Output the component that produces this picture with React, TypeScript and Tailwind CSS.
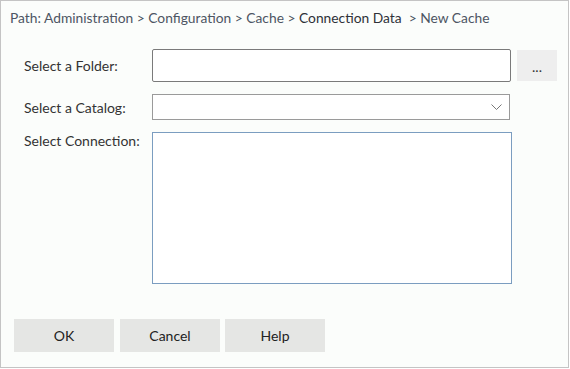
export default function App() {
  return (
    <div className="w-[570px] h-[369px] bg-white">
      <div
        className="w-[569px] h-[368px] border border-[#c4c4c4] bg-[#fbfdfb] flex flex-col text-[14px] text-[#333]"
        style={{ fontFamily: "Lato, 'Open Sans', sans-serif" }}
      >
        {/* breadcrumb */}
        <div className="pl-[9px] pt-[9px] h-[48px] leading-[16px] text-[13.8px] text-[#4d5563] whitespace-pre">
          Path: Administration &gt; Configuration &gt; Cache &gt; <span className="text-[#2e3138]">Connection Data</span>  &gt; New Cache
        </div>

        <div className="flex flex-col pl-[23px]">
          <div className="flex items-center h-[33px]">
            <label className="w-[128px]">Select a Folder:</label>
            <input className="w-[359px] h-[33px] border border-[#7a7a7a] rounded-[2px] bg-white outline-none" />
            <button className="ml-[6px] w-[40px] h-[31px] bg-[#eeeeee] text-[#333] leading-none pt-[2px]">...</button>
          </div>

          <div className="flex items-center h-[26px] mt-[12px]">
            <label className="w-[128px]">Select a Catalog:</label>
            <div className="w-[358px] h-[26px] border border-[#9a9a9a] bg-white flex items-center justify-end pr-[7px]">
              <svg width="11" height="6" viewBox="0 0 11 6" fill="none">
                <path d="M0.5 0.5 L5.5 5.5 L10.5 0.5" stroke="#777" strokeWidth="1" />
              </svg>
            </div>
          </div>

          <div className="flex items-start mt-[12px]">
            <label className="w-[128px] leading-[18px]">Select Connection:</label>
            <textarea className="w-[360px] h-[152px] border border-[#7b9dc0] bg-white outline-none resize-none" />
          </div>
        </div>

        <div className="flex gap-[6px] pl-[13px] mt-[35px]">
          <button className="w-[100px] h-[33px] bg-[#e5e6e4] text-[#222]">OK</button>
          <button className="w-[100px] h-[33px] bg-[#e5e6e4] text-[#222]">Cancel</button>
          <button className="w-[100px] h-[33px] bg-[#e5e6e4] text-[#222] -ml-px">Help</button>
        </div>
      </div>
    </div>
  );
}
